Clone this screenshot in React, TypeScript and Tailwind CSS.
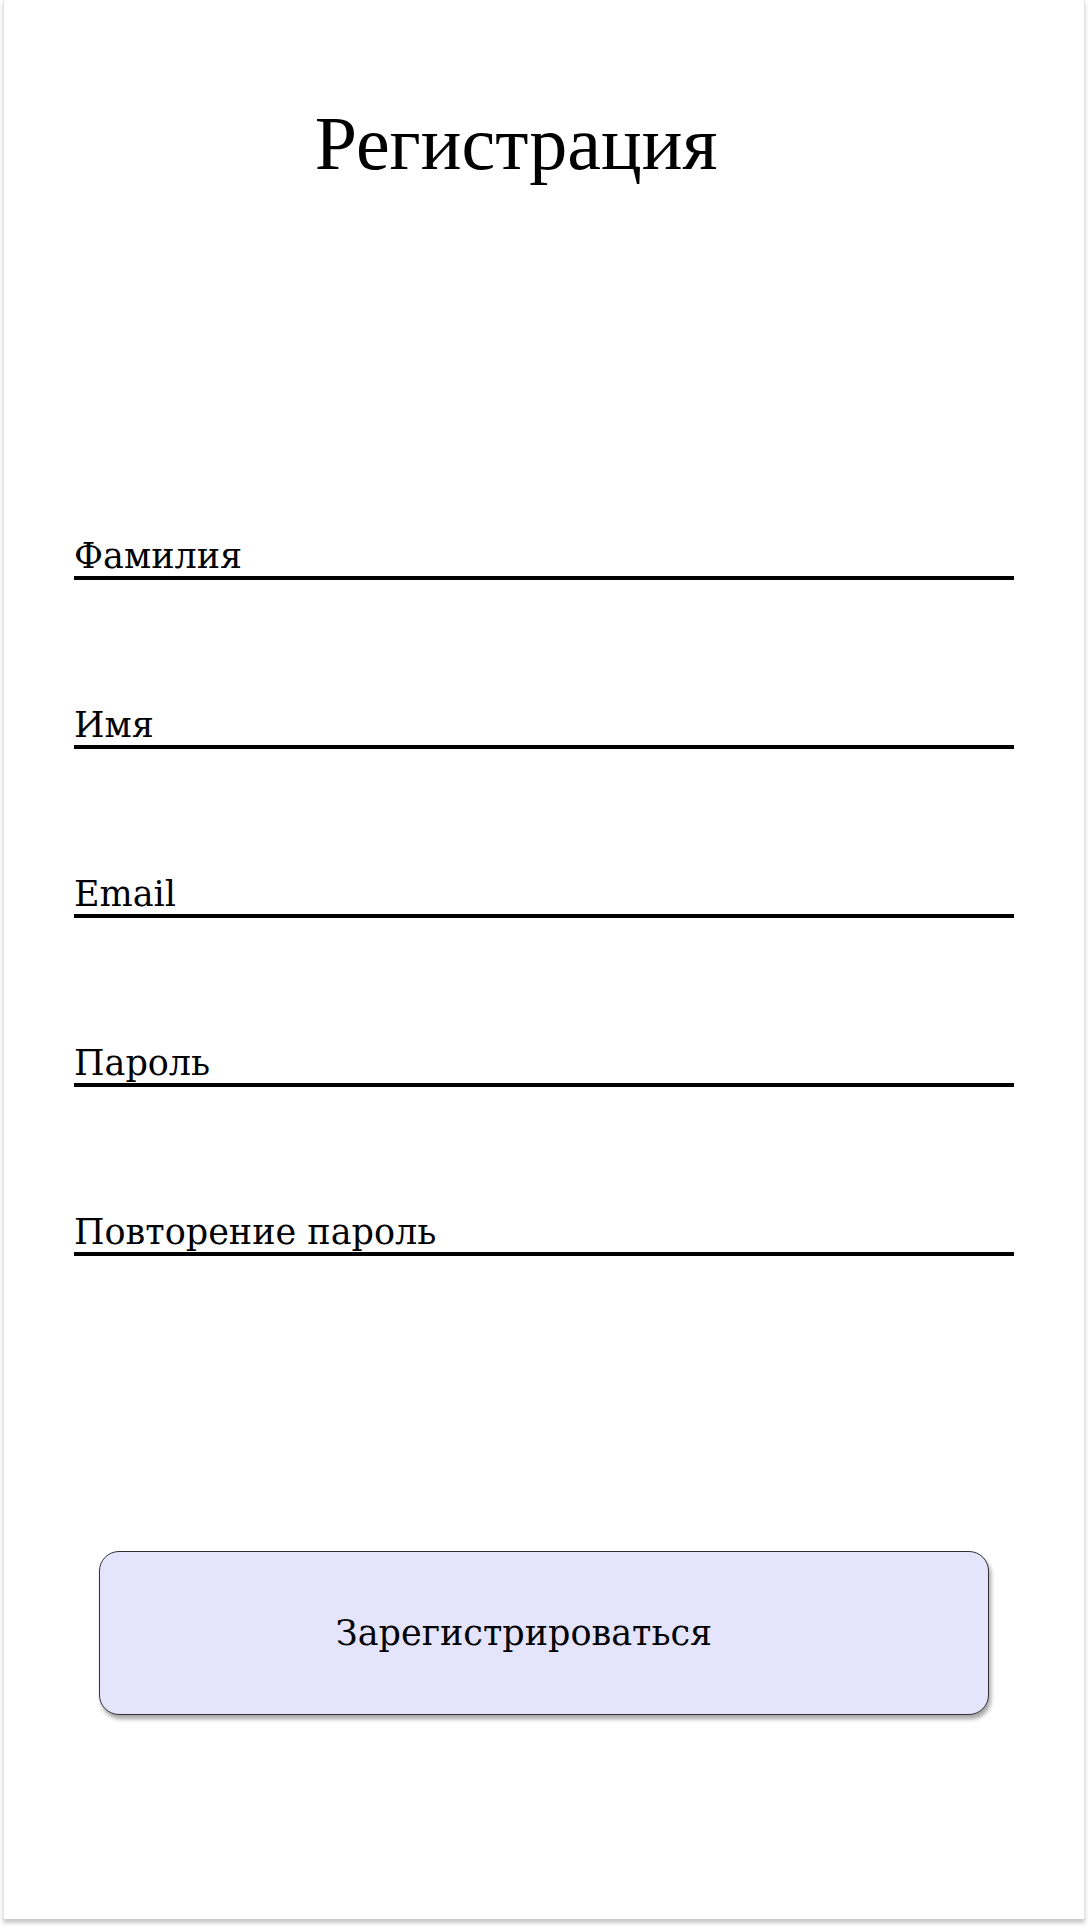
import React from 'react';

const fields = ['Фамилия', 'Имя', 'Email', 'Пароль', 'Повторение пароль'];

export default function App() {
  return (
    <div className="w-[1088px] h-[1928px] bg-white">
      {/* Screen card */}
      <div className="ml-[3px] w-[1082px] h-[1919px] bg-white border-x border-[#e2e2e2] shadow-[0_4px_4px_rgba(0,0,0,0.22)] flex flex-col px-[70px]">
        <h1 className="pt-[105px] pr-[56px] text-center text-[76px] leading-[76px] text-black font-['Liberation_Serif',serif] font-normal">
          Регистрация
        </h1>

        {/* Fields */}
        <div className="mt-[355px] flex flex-col gap-[125px]">
          {fields.map((label) => (
            <div
              key={label}
              className="border-b-4 border-black text-[35px] leading-[40px] text-black font-['DejaVu_Serif',serif]"
            >
              {label}
            </div>
          ))}
        </div>

        {/* Submit */}
        <button className="mt-[295px] mx-[25px] h-[164px] rounded-[20px] border border-[#333333] bg-[#e4e4fd] shadow-[2px_4px_4px_rgba(0,0,0,0.35)] pr-[40px] text-[35px] text-black font-['DejaVu_Serif',serif]">
          Зарегистрироваться
        </button>
      </div>
    </div>
  );
}
